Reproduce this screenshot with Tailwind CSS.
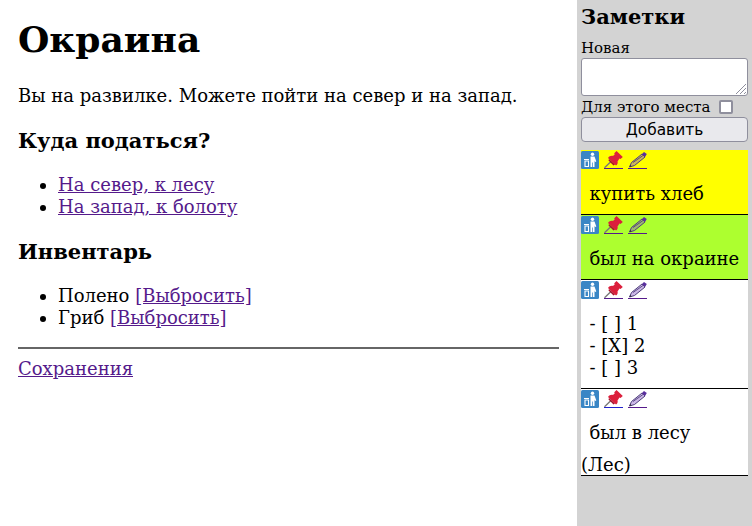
<!DOCTYPE html>
<html><head><meta charset="utf-8"><script src="https://cdn.jsdelivr.net/npm/@tailwindcss/browser@4"></script></head>
<body class="bg-white">
<svg class="hidden">
<symbol id="trash" viewBox="0 0 18 18"><rect width="18" height="18" rx="1.500" fill="#3a86c5"/><circle cx="11.500" cy="3.200" r="1.700" fill="#fff"/><path d="M9.500 5.500h4l1.800 5-1.300.5-.5-1.500V16h-1.700v-4.500h-.7V16H9.500z" fill="#fff"/><path d="M3 8.500h5M4 10h3.500v5.500H4z" stroke="#fff" stroke-width="1.100" fill="none"/></symbol>
<symbol id="pin" viewBox="0 0 19 17"><path d="M.5 16.800 7 10.500" stroke="#777" stroke-width="1.300" fill="none"/><path d="M10 2.500 12.500 0 18.800 6 16.500 8 15.500 7.500 13.500 10.500C14 12 13.500 13.500 12 14.500L4 7C5 5.500 7 4.500 9 5L11 3Z" fill="#dc1f3c"/><path d="M5 8 11 13.500 9.500 14.500 4.500 9.500Z" fill="#a8102a"/></symbol>
<symbol id="pencil" viewBox="0 0 19 17"><path d="M1.500 16 3.500 11.500 14 3 17 6 6.500 14.500Z" fill="#8b5fc7" fill-opacity=".45" stroke="#4f3f7c" stroke-width="1"/><path d="M5 11.500 15 4.500" stroke="#4f3f7c" stroke-width=".9"/><path d="M14 3 16 1 18.800 3 17 6Z" fill="#5a2f9e"/><path d="M1.500 16 2.300 14 3.500 15.200Z" fill="#222"/></symbol>
</svg>
<div class="flex h-[526px] w-[752px] overflow-hidden font-['DejaVu_Serif',serif] text-black">
<main class="w-[577px] shrink-0 pl-[18px] pr-[18px]">
<h1 class="text-[36px] leading-[42px] font-bold mt-[18px] mb-[25px]">Окраина</h1>
<p class="text-[18px] leading-[21px]">Вы на развилке. Можете пойти на север и на запад.</p>
<h2 class="text-[21px] leading-[25px] font-bold mt-[22px] mb-[21px]">Куда податься?</h2>
<ul class="list-disc pl-[40px] text-[18px] leading-[22px]">
<li><a class="underline text-[#551a8b]">На север, к лесу</a></li>
<li><a class="underline text-[#551a8b]">На запад, к болоту</a></li>
</ul>
<h2 class="text-[21px] leading-[25px] font-bold mt-[21px] mb-[21px]">Инвентарь</h2>
<ul class="list-disc pl-[40px] text-[18px] leading-[22px]">
<li>Полено <a class="underline text-[#551a8b]">[Выбросить]</a></li>
<li>Гриб <a class="underline text-[#551a8b]">[Выбросить]</a></li>
</ul>
<hr class="mt-[18px] border-t-2 border-[#666] w-[541px]">
<p class="mt-[9px] text-[18px] leading-[21px]"><a class="underline text-[#551a8b]">Сохранения</a></p>
</main>
<aside class="w-[175px] bg-[#d3d3d3] pl-[4px] pr-[4px]">
<h3 class="text-[21px] leading-[25px] font-bold mt-[4px]">Заметки</h3>
<div class="text-[15px] leading-[18px] mt-[10px]">Новая</div>
<div class="relative h-[38px] w-[167px] mt-[1px] bg-white border border-[#8f8f9d] rounded-[3px]">
<svg class="absolute right-0 bottom-0" width="12" height="12" viewBox="0 0 12 12" stroke="#8f8f9d" fill="none"><path d="M1 11 11 1M5 11 11 5M9 11 11 9"/></svg>
</div>
<div class="flex items-center h-[18px] text-[15px] leading-[18px] mt-[2px]"><span>Для этого места</span><span class="ml-[8px] w-[14px] h-[14px] bg-white border-2 border-[#8f8f9d] rounded-[2px]"></span></div>
<button class="block w-[167px] h-[25px] mt-[1px] pt-[2px] bg-[#e9e9ed] border border-[#8f8f9d] rounded-[4px] font-['DejaVu_Sans',sans-serif] text-[15.4px] leading-[21px] text-center">Добавить</button>
<div class="mt-[8px] w-[167px] text-[18px] leading-[21px]">
<section class="h-[65px] bg-[#ffff00] border-b border-black">
<div class="flex h-[20px] items-start pt-[1px]">
<svg width="18" height="18"><use href="#trash"/></svg>
<a class="ml-[5px] block w-[19px] h-[18px] border-b border-[#551a8b]"><svg width="19" height="17"><use href="#pin"/></svg></a>
<a class="ml-[5px] block w-[19px] h-[18px] border-b border-[#551a8b]"><svg width="19" height="17"><use href="#pencil"/></svg></a>
</div>
<p class="mt-[13px] pl-[8.500px]">купить хлеб</p>
</section>
<section class="h-[65px] bg-[#adff2f] border-b border-black">
<div class="flex h-[20px] items-start pt-[1px]">
<svg width="18" height="18"><use href="#trash"/></svg>
<a class="ml-[5px] block w-[19px] h-[18px] border-b border-[#551a8b]"><svg width="19" height="17"><use href="#pin"/></svg></a>
<a class="ml-[5px] block w-[19px] h-[18px] border-b border-[#551a8b]"><svg width="19" height="17"><use href="#pencil"/></svg></a>
</div>
<p class="mt-[13px] pl-[8.500px]">был на окраине</p>
</section>
<section class="h-[109px] bg-white border-b border-black">
<div class="flex h-[20px] items-start pt-[1px]">
<svg width="18" height="18"><use href="#trash"/></svg>
<a class="ml-[5px] block w-[19px] h-[18px] border-b border-[#551a8b]"><svg width="19" height="17"><use href="#pin"/></svg></a>
<a class="ml-[5px] block w-[19px] h-[18px] border-b border-[#551a8b]"><svg width="19" height="17"><use href="#pencil"/></svg></a>
</div>
<div class="mt-[13px] pl-[8.500px] leading-[22px]"><p>- [ ] 1</p><p>- [X] 2</p><p>- [ ] 3</p></div>
</section>
<section class="h-[87px] bg-white border-b border-black">
<div class="flex h-[20px] items-start pt-[1px]">
<svg width="18" height="18"><use href="#trash"/></svg>
<a class="ml-[5px] block w-[19px] h-[18px] border-b border-[#2222cc]"><svg width="19" height="17"><use href="#pin"/></svg></a>
<a class="ml-[5px] block w-[19px] h-[18px] border-b border-[#551a8b]"><svg width="19" height="17"><use href="#pencil"/></svg></a>
</div>
<p class="mt-[13px] pl-[8.500px]">был в лесу</p>
<p class="mt-[11px]">(Лес)</p>
</section>
</div>
</aside>
</div>
</body></html>
